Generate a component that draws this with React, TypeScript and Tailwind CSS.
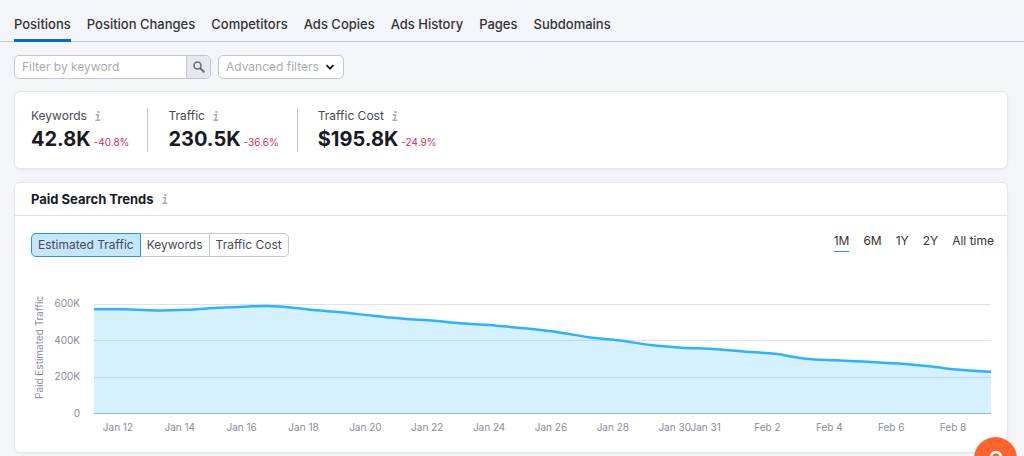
import React, { useState } from 'react'
import clsx from 'clsx'

const TABS = ['Positions', 'Position Changes', 'Competitors', 'Ads Copies', 'Ads History', 'Pages', 'Subdomains']

const METRICS = [
  { label: 'Keywords', value: '42.8K', change: '-40.8%' },
  { label: 'Traffic', value: '230.5K', change: '-36.6%' },
  { label: 'Traffic Cost', value: '$195.8K', change: '-24.9%' },
]

const SERIES = ['Estimated Traffic', 'Keywords', 'Traffic Cost']
const RANGES = ['1M', '6M', '1Y', '2Y', 'All time']

// Daily paid traffic, in thousands
const TRAFFIC = [
  572, 571, 565, 569, 579, 587, 587, 569, 555, 536, 520, 508, 493, 482, 466,
  446, 419, 401, 376, 362, 355, 341, 328, 302, 293, 285, 275, 260, 241, 230,
]
const MAX_TRAFFIC = 600
const Y_TICKS = ['600K', '400K', '200K', '0']

// day = column of the label on the time axis
const X_TICKS = [
  { day: 1, label: 'Jan 12' },
  { day: 3, label: 'Jan 14' },
  { day: 5, label: 'Jan 16' },
  { day: 7, label: 'Jan 18' },
  { day: 9, label: 'Jan 20' },
  { day: 11, label: 'Jan 22' },
  { day: 13, label: 'Jan 24' },
  { day: 15, label: 'Jan 26' },
  { day: 17, label: 'Jan 28' },
  { day: 19, label: 'Jan 30' },
  { day: 20, label: 'Jan 31' },
  { day: 22, label: 'Feb 2' },
  { day: 24, label: 'Feb 4' },
  { day: 26, label: 'Feb 6' },
  { day: 28, label: 'Feb 8' },
]

const CHART_W = 900
const CHART_H = 110

// Smooth line through all points
const buildLine = (values: number[]) => {
  const step = CHART_W / (values.length - 1)
  const y = (i: number) => {
    const value = values[Math.max(0, Math.min(values.length - 1, i))]
    return CHART_H - (value / MAX_TRAFFIC) * CHART_H
  }

  let path = `M0 ${y(0)}`
  for (let i = 0; i < values.length - 1; i++) {
    const c1 = y(i) + (y(i + 1) - y(i - 1)) / 6
    const c2 = y(i + 1) - (y(i + 2) - y(i)) / 6
    path += ` C${(i + 1 / 3) * step} ${c1} ${(i + 2 / 3) * step} ${c2} ${(i + 1) * step} ${y(i + 1)}`
  }
  return path
}

const InfoIcon = () => (
  <svg className="h-[10px] w-[6px] shrink-0 text-[#a9abb6]" viewBox="0 0 6 10" fill="none" stroke="currentColor" aria-hidden="true">
    <path d="M2.400 0h2v2h-2z" fill="currentColor" stroke="none" />
    <path d="M.8 3.700h2.700L2.600 9M.3 9.200h4.900" strokeWidth="1.400" />
  </svg>
)

const TrafficChart = () => {
  const line = buildLine(TRAFFIC)

  return (
    <div className="flex pt-[38px] text-[10px] leading-4 text-[#898d9a]">
      <span className="h-[104px] w-4 rotate-180 text-center whitespace-nowrap [writing-mode:vertical-rl]">
        Paid Estimated Traffic
      </span>
      <div className="flex h-[126px] w-[33px] flex-col justify-between text-right">
        {Y_TICKS.map((tick) => (
          <span key={tick}>{tick}</span>
        ))}
      </div>
      <div className="min-w-0 flex-1 pt-[9px] pl-[14px]">
        <svg
          className="block h-[110px] w-full overflow-visible"
          viewBox={`0 0 ${CHART_W} ${CHART_H}`}
          preserveAspectRatio="none"
          role="img"
          aria-label="Paid Estimated Traffic"
        >
          <g stroke="#e0e1e9" shapeRendering="crispEdges">
            <path d="M0 .5H900M0 36.5H900M0 73.5H900" vectorEffect="non-scaling-stroke" />
            <path d="M0 109.5H900" stroke="#b3bac4" vectorEffect="non-scaling-stroke" />
          </g>
          <path d={`${line} V${CHART_H} H0 Z`} fill="#2bb3ff" fillOpacity=".2" />
          <path d={line} fill="none" stroke="#2bb3ff" strokeWidth="2.5" vectorEffect="non-scaling-stroke" />
        </svg>
        <div className="-ml-[7px] mr-[7px] grid grid-cols-[repeat(29,minmax(0,1fr))] pt-[5px]">
          {X_TICKS.map((tick) => (
            <span
              key={tick.label}
              className="row-start-1 text-center whitespace-nowrap"
              style={{ gridColumn: `${tick.day} / span 2` }}
            >
              {tick.label}
            </span>
          ))}
        </div>
      </div>
    </div>
  )
}

export default function App() {
  const [activeTab, setActiveTab] = useState('Positions')
  const [series, setSeries] = useState('Estimated Traffic')
  const [range, setRange] = useState('1M')

  return (
    <div className="min-h-screen bg-[#f4f5f9] font-['Inter',sans-serif] text-[#333] antialiased">
      {/* Report tabs */}
      <nav className="flex gap-4 border-b border-[#c4c7cf] px-[14px] pt-[14px] text-[13px] leading-5 font-medium">
        {TABS.map((tab) => (
          <a
            key={tab}
            href="#"
            onClick={() => setActiveTab(tab)}
            className={clsx('-mb-px border-b-3 pb-[5px] whitespace-nowrap', activeTab === tab ? 'border-[#006dca]' : 'border-transparent')}
          >
            {tab}
          </a>
        ))}
      </nav>

      <main className="pt-[13px] pr-4 pl-[14px]">
        {/* Filters */}
        <div className="flex gap-[7px] text-[12px]">
          <form className="flex h-6 w-[197px] overflow-hidden rounded-[5px] border border-[#c4c7cf] bg-white">
            <input
              type="text"
              aria-label="Filter by keyword"
              placeholder="Filter by keyword"
              className="min-w-0 flex-1 px-[7px] outline-none placeholder:text-[#a9abb6]"
            />
            <button type="button" aria-label="Search" className="flex w-6 items-center justify-center border-l border-[#c4c7cf] bg-[#e7e8ee]">
              <svg className="h-3 w-3 text-[#6c6e79]" viewBox="0 0 12 12" fill="none" stroke="currentColor" aria-hidden="true">
                <circle cx="4.5" cy="4.5" r="3.5" strokeWidth="1.6" />
                <path d="M7 7l4.300 4.300" strokeWidth="2" />
              </svg>
            </button>
          </form>
          <div className="relative">
            <select
              aria-label="Advanced filters"
              className="h-6 w-[126px] appearance-none rounded-[5px] border border-[#c4c7cf] bg-white px-[7px] text-[#a9abb6] outline-none"
            >
              <option>Advanced filters</option>
            </select>
            <svg className="pointer-events-none absolute top-2 right-[9px] h-2 w-[10px] text-[#191b23]" viewBox="0 0 10 8" fill="none" stroke="currentColor" aria-hidden="true">
              <path d="M1.500 2.200L5 5.700l3.500-3.500" strokeWidth="1.800" />
            </svg>
          </div>
        </div>

        {/* Summary */}
        <section className="mt-3 flex rounded-md border border-[#e6e7ed] bg-white px-4 py-4 shadow-xs">
          {METRICS.map((metric, index) => (
            <div key={metric.label} className={clsx('h-11 pr-[18px]', index > 0 && 'border-l border-[#c4c7cf] pl-5')}>
              <div className="flex items-center gap-2 text-[12px] leading-4 text-[#484a54]">
                {metric.label}
                <InfoIcon />
              </div>
              <div className="flex items-baseline gap-[3px] pt-px">
                <span className="text-[20px] leading-7 font-bold text-[#191b23]">{metric.value}</span>
                <span className="text-[10px] text-[#d1344f]">{metric.change}</span>
              </div>
            </div>
          ))}
        </section>

        {/* Trends */}
        <section className="mt-[13px] rounded-md border border-[#e6e7ed] bg-white shadow-xs">
          <header className="flex items-center gap-2 border-b border-[#e0e1e9] px-4 py-[6px]">
            <h2 className="text-[13px] leading-5 font-bold text-[#191b23]">Paid Search Trends</h2>
            <InfoIcon />
          </header>
          <div className="px-4 py-[17px]">
            <div className="flex items-start justify-between">
              <div className="flex text-[12px] text-[#484a54]">
                {SERIES.map((item) => (
                  <button
                    key={item}
                    onClick={() => setSeries(item)}
                    className={clsx(
                      '-ml-px h-6 border px-[6px] first:ml-0 first:rounded-l-[5px] last:rounded-r-[5px]',
                      series === item ? 'z-10 border-[#2b94e1] bg-[#c4e5fe]' : 'border-[#c4c7cf] bg-white'
                    )}
                  >
                    {item}
                  </button>
                ))}
              </div>
              <div className="-mr-[3px] flex gap-[14px] text-[12px] leading-4">
                {RANGES.map((item) => (
                  <button
                    key={item}
                    onClick={() => setRange(item)}
                    className={clsx('border-b pb-[2px]', range === item ? 'border-[#2b94e1]' : 'border-transparent')}
                  >
                    {item}
                  </button>
                ))}
              </div>
            </div>
            <TrafficChart />
          </div>
        </section>
      </main>

      {/* Help */}
      <button aria-label="Help" className="fixed right-[7px] -bottom-6 flex h-[43px] w-[43px] items-center justify-center rounded-full bg-[#ff642d]">
        <svg className="h-4 w-4 text-white" viewBox="0 0 16 16" fill="none" stroke="currentColor" aria-hidden="true">
          <path d="M3 6a5 5 0 1 1 7 4.600c-1.400.6-2 1.200-2 2.400" strokeWidth="2.500" />
        </svg>
      </button>
    </div>
  )
}
